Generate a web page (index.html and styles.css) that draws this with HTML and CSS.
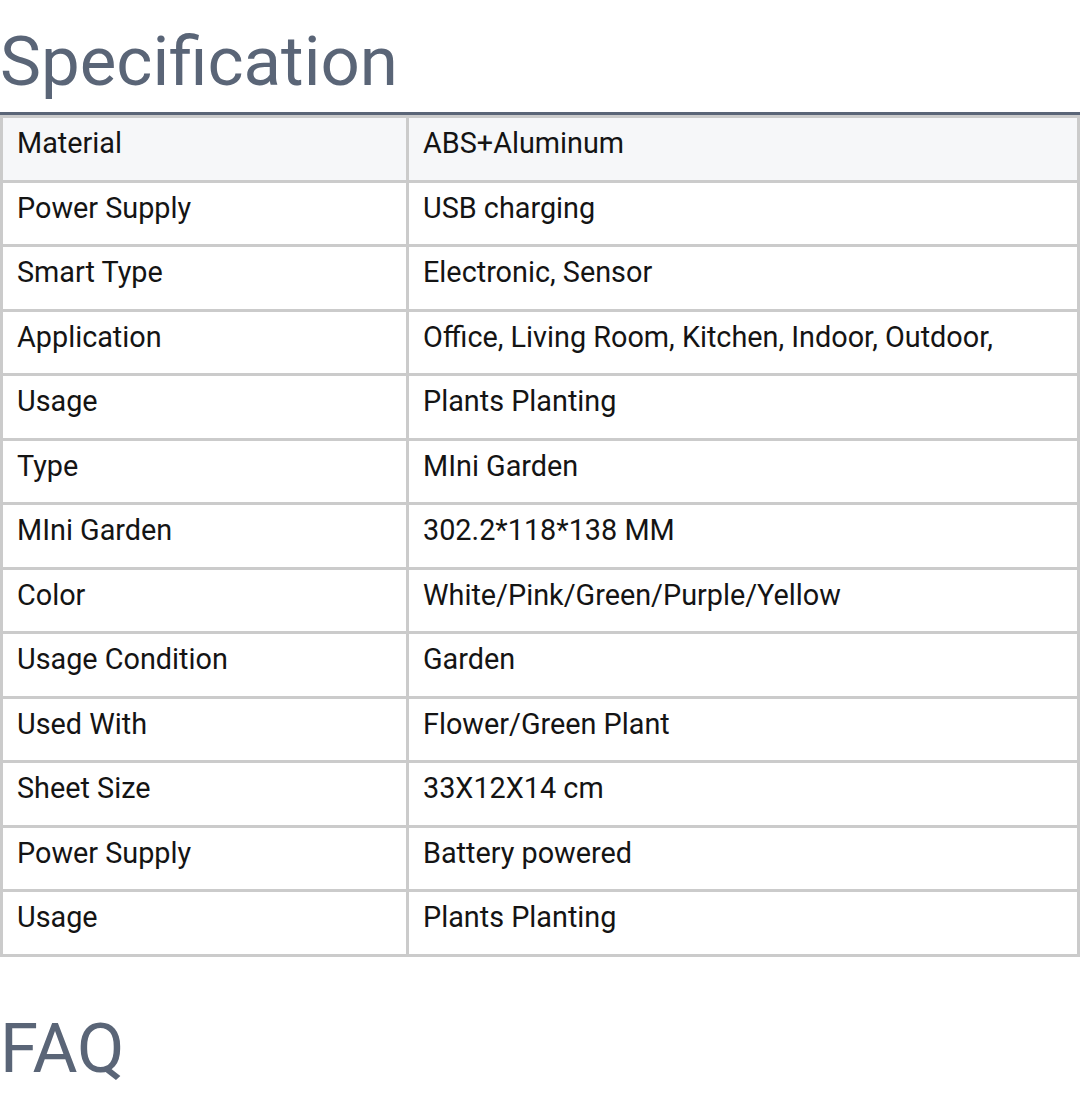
FILE: index.html
```html
<!DOCTYPE html>
<html>
<head>
<meta charset="utf-8">
<link rel="stylesheet" href="styles.css">
</head>
<body>
<h2 class="section-title spec-title">Specification</h2>
<table class="spec-table">
  <colgroup><col class="col-key"><col class="col-val"></colgroup>
  <tbody>
    <tr class="row-head"><td>Material</td><td>ABS+Aluminum</td></tr>
    <tr><td>Power Supply</td><td>USB charging</td></tr>
    <tr><td>Smart Type</td><td>Electronic, Sensor</td></tr>
    <tr><td>Application</td><td>Office, Living Room, Kitchen, Indoor, Outdoor,</td></tr>
    <tr><td>Usage</td><td>Plants Planting</td></tr>
    <tr><td>Type</td><td>MIni Garden</td></tr>
    <tr><td>MIni Garden</td><td>302.2*118*138 MM</td></tr>
    <tr><td>Color</td><td>White/Pink/Green/Purple/Yellow</td></tr>
    <tr><td>Usage Condition</td><td>Garden</td></tr>
    <tr><td>Used With</td><td>Flower/Green Plant</td></tr>
    <tr><td>Sheet Size</td><td>33X12X14 cm</td></tr>
    <tr><td>Power Supply</td><td>Battery powered</td></tr>
    <tr><td>Usage</td><td>Plants Planting</td></tr>
  </tbody>
</table>
<h2 class="section-title faq-title">FAQ</h2>
</body>
</html>
```
FILE: styles.css
```css
html, body {
  margin: 0;
  padding: 0;
  background: #ffffff;
}
body {
  font-family: Roboto, "Liberation Sans", sans-serif;
  width: 1080px;
}
.section-title {
  margin: 0;
  font-family: Roboto, "Liberation Sans", sans-serif;
  font-weight: 400;
  font-size: 69px;
  line-height: 84px;
  color: #5a6577;
}
.spec-title {
  padding-top: 20px;
  padding-bottom: 8px;
  border-bottom: 3px solid #5a6577;
}
.faq-title {
  margin-top: 50px;
}
.spec-table {
  width: 1080px;
  border-collapse: collapse;
  table-layout: fixed;
  border: 3px solid #cbcbcb;
}
.col-key { width: 406px; }
.spec-table td {
  border: 3px solid #cbcbcb;
  padding: 8px 14px 19.5px;
  font-size: 28.8px;
  line-height: 34px;
  color: #141414;
  vertical-align: top;
  text-align: left;
}
.row-head td {
  background: #f6f7f9;
}
```
